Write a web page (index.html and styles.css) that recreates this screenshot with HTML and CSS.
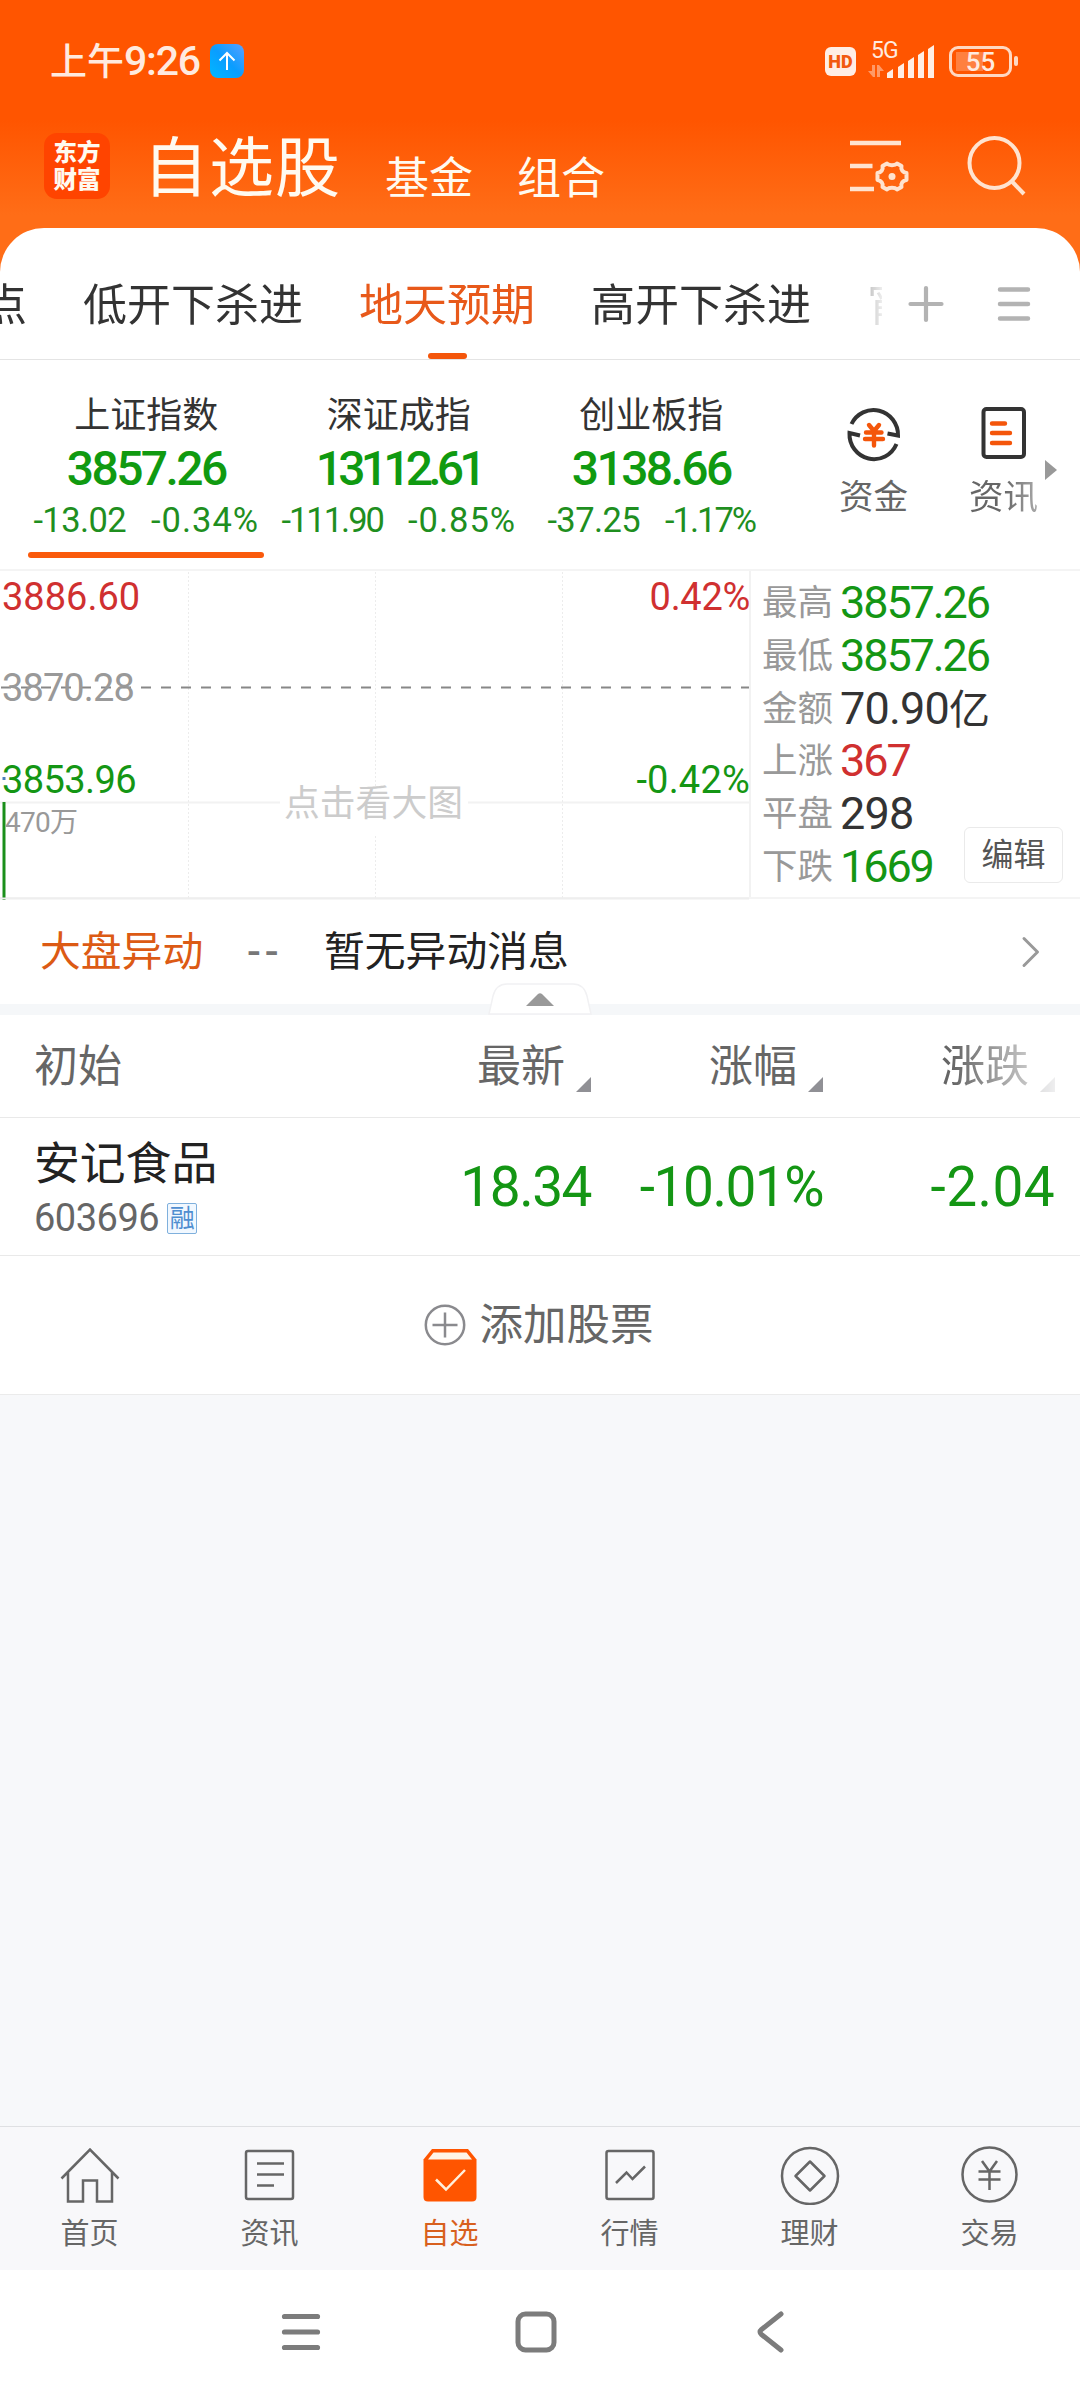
FILE: index.html
```html
<!DOCTYPE html>
<html lang="zh-CN">
<head>
<meta charset="utf-8">
<title>自选股</title>
<link rel="stylesheet" href="styles.css">
</head>
<body>
<div class="screen">
  <header class="header">
    <div class="status">
      <span class="status-time">上午<span class="status-clock">9:26</span></span>
      <svg class="status-up" width="34" height="34" viewBox="0 0 34 34">
        <defs><linearGradient id="up" x1="0" y1="1" x2="1" y2="0"><stop offset="0" stop-color="#00b8ff"/><stop offset=".5" stop-color="#0a9dff"/><stop offset="1" stop-color="#5aa0ff"/></linearGradient></defs>
        <rect width="34" height="34" rx="8" fill="url(#up)"/>
        <path d="M17 26V9M9.500 16.500 17 9l7.500 7.500" fill="none" stroke="#fff" stroke-width="2"/>
      </svg>
      <div class="status-icons">
        <span class="hd">HD</span>
        <div class="signal">
          <span class="signal-net">5G</span>
          <svg width="68" height="36" viewBox="0 0 68 36">
            <g fill="#fff" opacity=".4"><path d="M4 22h3v12H5L0 28h4zM9 34V22h2l5 6h-4v6z"/></g>
            <g fill="#ffeee5"><path d="M19 35v-5l6-4v9zM30 35V24l6-4v15zM40 35V18l6-4v21zM50 35V12l6-4v27zM60 35V6l6-4v33z"/></g>
          </svg>
        </div>
        <div class="battery"><span class="battery-body">55</span><i class="battery-tip"></i></div>
      </div>
    </div>
    <div class="titlebar">
      <div class="logo"><span>东方</span><span>财富</span></div>
      <h1 class="title">自选股</h1>
      <span class="title-link">基金</span>
      <span class="title-link">组合</span>
      <svg class="ic-filter" width="60" height="56" viewBox="0 0 60 56" fill="none" stroke="#ffe3cf" stroke-width="4.500">
        <path d="M0 5h51M0 28h22.500M0 51h24"/>
        <path stroke-width="4" stroke-linejoin="round" d="M37 25.500c2 2.200 8 2.200 10 0l4.500 2.500c-1 3.800 1.500 6.500 5 7v7c-3.500.5-6 3.200-5 7L47 51.500c-2-2.200-8-2.200-10 0L32.500 49c1-3.800-1.500-6.500-5-7v-7c3.500-.5 6-3.200 5-7z"/>
        <circle cx="42" cy="38.500" r="3.500" fill="#ffe3cf" stroke="none"/>
      </svg>
      <svg class="ic-search" width="60" height="62" viewBox="0 0 60 62" fill="none" stroke="#ffe3cf" stroke-width="4">
        <circle cx="27.500" cy="28" r="25"/><path d="m44.500 46 12.500 13"/>
      </svg>
    </div>
  </header>

  <main class="sheet">
    <nav class="tabs">
      <div class="tabs-list">
        <span class="tab">点</span>
        <span class="tab">低开下杀进</span>
        <span class="tab tab-on">地天预期</span>
        <span class="tab">高开下杀进</span>
        <span class="tab">宵</span>
      </div>
      <svg class="ic-plus" width="36" height="38" viewBox="0 0 36 38" stroke="#b3b3b3" stroke-width="4.200" stroke-linecap="round"><path d="M2.500 19h31M18 3v32"/></svg>
      <svg class="ic-menu" width="34" height="36" viewBox="0 0 34 36" stroke="#b3b3b3" stroke-width="4.500" stroke-linecap="round"><path d="M3 3.500h28M3 18h28M3 32.500h28"/></svg>
    </nav>

    <section class="indices">
      <div class="index index-on">
        <span class="index-name">上证指数</span><b class="index-val">3857.26</b>
        <span class="index-chg"><span>-13.02</span><span class="pct">-0.34%</span></span>
      </div>
      <div class="index">
        <span class="index-name">深证成指</span><b class="index-val index-val-long">13112.61</b>
        <span class="index-chg"><span class="narrow">-111.90</span><span class="pct">-0.85%</span></span>
      </div>
      <div class="index">
        <span class="index-name">创业板指</span><b class="index-val">3138.66</b>
        <span class="index-chg"><span>-37.25</span><span class="narrow">-1.17%</span></span>
      </div>
      <div class="tool">
        <svg width="60" height="60" viewBox="0 0 60 60" fill="none" stroke="#333" stroke-width="4">
          <path d="M7.500 21A24.500 25 0 0 1 54 32.500l-10.500-2M52.500 41A24.500 25 0 0 1 5.500 30L16 32.500"/>
          <g stroke="#f4560b" stroke-width="4.400" stroke-linecap="round"><path d="m25 22 5 6 5-6M22 29.500h15.500M21 36h18M30 29v13.500"/></g>
        </svg>
        <span>资金</span>
      </div>
      <div class="tool tool-news">
        <svg width="60" height="60" viewBox="0 0 60 60" fill="none" stroke="#333" stroke-width="4">
          <rect x="9.500" y="6" width="40.500" height="48" rx="3"/>
          <g stroke="#f4560b" stroke-width="4.400" stroke-linecap="round"><path d="M18 20.500h13M18 30h18M18 40h18"/></g>
        </svg>
        <span>资讯</span>
      </div>
      <i class="more"></i>
    </section>

    <section class="market">
      <div class="chart">
        <svg class="chart-grid" width="749" height="330" viewBox="0 0 749 330" fill="none">
          <path d="M0 232.500h280M468 232.500h282" stroke="#f2f2f2" stroke-width="2"/>
          <path d="M188.500 2v326M375.500 2v214M375.500 266v62M562.500 2v326" stroke="#ececec" stroke-dasharray="2 2"/>
          <path d="M1 117.500h749" stroke="#888" stroke-width="2" stroke-dasharray="10 10"/>
          <path d="M4 232v98" stroke="#1a8f1a" stroke-width="3"/>
          <path d="M2.500 208.500h3" stroke="#4a7ebb" stroke-width="3"/>
          <path d="M0 328.500h750" stroke="#eee" stroke-width="2"/>
        </svg>
        <span class="lb lb-high up">3886.60</span><span class="lb lb-highp up">0.42%</span>
        <span class="lb lb-mid">3870.28</span>
        <span class="lb lb-low down">3853.96</span><span class="lb lb-lowp down">-0.42%</span>
        <span class="lb lb-vol">470万</span><span class="lb lb-tip">点击看大图</span>
      </div>
      <dl class="stats">
        <div><dt>最高</dt><dd class="down">3857.26</dd></div>
        <div><dt>最低</dt><dd class="down">3857.26</dd></div>
        <div><dt>金额</dt><dd class="wide">70.90<span class="unit">亿</span></dd></div>
        <div><dt>上涨</dt><dd class="up">367</dd></div>
        <div><dt>平盘</dt><dd class="wide">298</dd></div>
        <div><dt>下跌</dt><dd class="down">1669</dd></div>
      </dl>
      <button class="edit">编辑</button>
    </section>

    <section class="news">
      <span class="news-tag">大盘异动</span><span class="news-time">--</span><span class="news-text">暂无异动消息</span>
      <svg class="news-go" width="20" height="34" viewBox="0 0 20 34" fill="none" stroke="#999" stroke-width="3" stroke-linecap="round" stroke-linejoin="round"><path d="M3 3.500 16.500 17 3 30.500"/></svg>
      <svg class="handle" width="104" height="32" viewBox="0 0 104 32"><path d="M1 31 5 13Q8 1 19 1h66q11 0 14 12l4 18z" fill="#fff" stroke="#f1f1f3" stroke-width="1.500"/><path d="m38 23 12-12q2-1.500 4 0l12 12z" fill="#999"/></svg>
    </section>

    <section class="table">
      <div class="thead">
        <span class="c-name">初始</span>
        <span class="c-num">最新<i></i></span><span class="c-num">涨幅<i></i></span><span class="c-num c-fade">涨跌<i></i></span>
      </div>
      <div class="trow">
        <div class="c-name"><div class="stock">安记食品</div><div class="code">603696<span class="badge">融</span></div></div>
        <span class="c-num down">18.34</span><span class="c-num down">-10.01%</span><span class="c-num c-last down">-2.04</span>
      </div>
      <div class="add">
        <svg width="42" height="42" viewBox="0 0 42 42" fill="none" stroke="#8a8a8e" stroke-width="2.500"><circle cx="21" cy="21" r="19.200"/><path d="M8.500 21h25M21 8.500v25"/></svg>
        <span>添加股票</span>
      </div>
    </section>
  </main>

  <nav class="tabbar">
    <a class="item"><svg width="60" height="60" viewBox="0 0 60 60"><path d="M1.500 33.500 30 4.500l28.500 29M8 27v29.500h15V35.500h14v21h15V27"/></svg>首页</a>
    <a class="item"><svg width="60" height="60" viewBox="0 0 60 60"><rect x="6" y="6" width="47" height="48" rx="2"/><path d="M17 18.500h27M17 29.500h27M17 40.500h17"/></svg>资讯</a>
    <a class="item item-on"><svg width="60" height="60" viewBox="0 0 60 60"><path d="M3.500 14.500 12 4h36l8.500 10.500V52q0 4.500-4.500 4.500H8q-4.500 0-4.500-4.500z" fill="#ff5500" stroke="none"/><path d="M8 14.500 13.500 7.500h33l5.500 7z" fill="#fff4e6" stroke="none"/><path d="m16 34.500 10 10 19-19.500" stroke="#fff0dc"/></svg>自选</a>
    <a class="item"><svg width="60" height="60" viewBox="0 0 60 60"><rect x="6.500" y="6" width="47" height="48" rx="2"/><path d="m16 38 10.500-10.500 6 6.500L45 21.500"/></svg>行情</a>
    <a class="item"><svg width="60" height="60" viewBox="0 0 60 60"><circle cx="30" cy="31" r="28"/><path stroke-linejoin="round" d="m30 16.500 14.500 14.500L30 45.500 15.500 31z"/></svg>理财</a>
    <a class="item"><svg width="60" height="60" viewBox="0 0 60 60"><circle cx="29.500" cy="29.500" r="27"/><path d="m22 16 7.500 10.500L37 16M18.500 26.500h22M18.500 34.500h22M29.500 26v19"/></svg>交易</a>
  </nav>
  <nav class="sysnav">
    <svg width="40" height="44" viewBox="0 0 40 44" stroke-width="5.200"><path d="M3.500 6.500h33M3.500 22h33M3.500 37.500h33"/></svg>
    <svg width="42" height="44" viewBox="0 0 42 44" stroke-width="5"><rect x="3" y="4" width="36" height="36" rx="7.500"/></svg>
    <svg width="40" height="44" viewBox="0 0 40 44" stroke-width="5"><path d="M30 4 10.500 19.500q-3 2.500 0 5L30 40"/></svg>
  </nav>
</div>
</body>
</html>
```
FILE: styles.css
```css
* { box-sizing: border-box; }
body { margin: 0; background: #fff; }
.screen {
  width: 1080px; height: 2400px; overflow: hidden;
  display: flex; flex-direction: column; background: #f7f8fa;
  font-family: Roboto, "Noto Sans CJK SC", sans-serif; color: #333;
  white-space: nowrap;
}
.up { color: #d03030; }
.down { color: #149614; }

/* header */
.header { height: 272px; flex: none; background: linear-gradient(#ff5500 120px, #ff6d17 215px); }
.status { height: 120px; display: flex; align-items: flex-start; padding: 36px 62px 0 50px; color: #ffeadf; }
.status-time { font-size: 37px; line-height: 50px; font-weight: 500; width: 160px; }
.status-clock { font-size: 41px; letter-spacing: -1.2px; }
.status-up { margin-top: 8px; }
.status-icons { margin-left: auto; display: flex; height: 50px; align-items: center; }
.hd { width: 31px; height: 29px; border-radius: 6px; background: #ffeee5; color: #f25a10; font: 900 18px/30px Roboto, sans-serif; text-align: center; }
.signal { position: relative; width: 68px; height: 36px; margin-left: 12px; }
.signal-net { position: absolute; left: 3px; top: -4px; font-size: 23px; line-height: 24px; letter-spacing: -1px; }
.battery { display: flex; align-items: center; margin-left: 13px; }
.battery-body { width: 63px; height: 31px; border: 3px solid #ffd8c2; border-radius: 9px; font-size: 26px; line-height: 26px; text-align: center; font-weight: 500; background: linear-gradient(90deg, #ff8040 55%, transparent 55%) 4px 3px / 50px 19px no-repeat; }
.battery-tip { width: 4px; height: 10px; margin-left: 2px; border-radius: 2px; background: #ffd8c2; }

.titlebar { height: 108px; display: flex; padding-left: 44px; color: #fffaf0; }
.logo { width: 66px; height: 66px; margin-top: 13px; border-radius: 13px; background: #ff4400; font: 900 23.500px/27px "Noto Sans CJK SC", sans-serif; display: flex; flex-direction: column; align-items: center; padding-top: 5px; }
.title { margin: 13px 0 0 33px; width: 242px; font-size: 65px; line-height: 72px; font-weight: 400; letter-spacing: 1px; }
.title-link { margin-top: 27px; width: 132px; font-size: 44px; line-height: 64px; }
.ic-filter { margin: 18px 0 0 201px; flex: none; }
.ic-search { margin: 15px 0 0 57px; flex: none; }

/* sheet */
.sheet { margin-top: -44px; border-radius: 44px 44px 0 0; background: #fff; flex: none; height: 1167px; border-bottom: 1px solid #ebebeb; }
.tabs { height: 132px; border-bottom: 1px solid #e4e4e4; display: flex; align-items: center; }
.tabs-list { width: 882px; height: 131px; display: flex; gap: 56px; overflow: hidden; -webkit-mask-image: linear-gradient(90deg, #000 820px, transparent 888px); mask-image: linear-gradient(90deg, #000 820px, transparent 888px); }
.tab { flex: none; font-size: 44px; line-height: 64px; padding-top: 46px; height: 131px; }
.tab:first-child { margin-left: -17px; }
.tab-on { color: #e8591a; display: flex; flex-direction: column; align-items: center; }
.tab-on::after { content: ""; width: 39px; height: 6px; margin-top: 15px; border-radius: 3px; background: #f4560b; flex: none; }
.ic-plus { margin: 20px 0 0 26px; }
.ic-menu { margin: 20px 0 0 53px; }
.indices { height: 211px; border-bottom: 2px solid #f4f4f4; display: flex; padding-left: 20px; position: relative; }
.index { width: 252.500px; flex: none; display: flex; flex-direction: column; align-items: center; padding-top: 33px; }
.index-on::after { content: ""; width: 236px; height: 6px; margin-top: 11px; border-radius: 3px; background: #fa5a0c; flex: none; }
.index-name { font-size: 36px; line-height: 46px; }
.index-val { font-size: 48px; line-height: 60px; font-weight: 500; color: #109a10; letter-spacing: -2.600px; }
.index-val-long { letter-spacing: -4.800px; }
.index-chg { display: flex; gap: 25px; font-size: 34.500px; line-height: 42px; color: #1f8f1f; letter-spacing: -.6px; }
.index-chg .pct { letter-spacing: 1px; }
.index-chg .narrow { letter-spacing: -2px; }
.tool { width: 130px; flex: none; padding-top: 43px; margin-left: 31px; display: flex; flex-direction: column; align-items: center; font-size: 34.500px; line-height: 46px; color: #666; gap: 11px; }
.tool + .tool { margin-left: 0; }
.tool-news span { background: linear-gradient(90deg, #666 50%, #aaa); -webkit-background-clip: text; background-clip: text; color: transparent; }
.more { position: absolute; left: 1045px; top: 100px; border: 10px solid transparent; border-left: 12px solid #999; border-right: 0; }

/* market */
.market { height: 328px; display: flex; position: relative; border-bottom: 2px solid #f4f4f4; }
.chart { width: 751px; flex: none; border-right: 2px solid #f2f2f2; position: relative; }
.chart-grid { display: block; margin-top: -1px; }
.lb { position: absolute; font-size: 38px; line-height: 44px; }
.lb-high { left: 2px; top: 4px; } .lb-highp { right: -1px; top: 4px; letter-spacing: -.3px; }
.lb-mid { left: 2px; top: 95px; color: #999; letter-spacing: -.9px; }
.lb-low { left: 2px; top: 187px; letter-spacing: -.6px; } .lb-lowp { right: -1px; top: 187px; letter-spacing: .2px; }
.lb-vol { left: 5px; top: 230px; font-size: 28px; color: #999; letter-spacing: -.7px; }
.lb-tip { left: 284px; top: 211px; font-size: 35.800px; color: #ccc; }
.stats { margin: 6px 0 0 11px; font-size: 45px; line-height: 52.800px; }
.stats div { display: flex; height: 52.800px; }
.stats dt { font-size: 35.500px; color: #999; width: 78px; }
.stats dd { margin: 0; letter-spacing: -2.100px; }
.stats dd.wide { letter-spacing: -.8px; }
.unit { font-size: 41px; }
.edit { position: absolute; left: 964px; top: 256px; width: 99px; height: 56px; padding: 0; border: 1px solid #eaeaea; border-radius: 6px; background: #fff; color: #555; font: 32px/50px Roboto, "Noto Sans CJK SC", sans-serif; }

/* news strip */
.news { height: 116px; border-bottom: 11px solid #f5f7f9; position: relative; display: flex; align-items: center; padding: 0 39px 0 40px; font-size: 40.800px; line-height: 60px; color: #222; }
.news-tag { color: #dc5a14; width: 207px; }
.news-time { color: #777; width: 77px; font-weight: 500; letter-spacing: 4px; }
.news-go { margin-left: auto; }
.handle { position: absolute; left: 488px; top: 84px; }

/* watch list */
.thead, .trow { display: flex; align-items: center; border-bottom: 1px solid #e9e9e9; padding-left: 34px; }
.thead { height: 103px; font-size: 44px; line-height: 64px; color: #666; padding-top: 1px; }
.c-name { width: 325px; flex: none; }
.c-num { width: 232px; flex: none; text-align: right; }
.thead i { display: inline-block; margin-left: 11px; border-bottom: 15px solid #909095; border-left: 15px solid transparent; vertical-align: -10px; }
.c-fade { -webkit-mask-image: linear-gradient(90deg, #000 130px, rgba(0,0,0,.15) 232px); mask-image: linear-gradient(90deg, #000 130px, rgba(0,0,0,.15) 232px); }
.trow { height: 138px; }
.trow .c-num { font-size: 55px; letter-spacing: -1.500px; }
.trow .c-last { letter-spacing: .4px; }
.stock { font-size: 45.800px; line-height: 60px; color: #222; margin-top: 3px; }
.code { display: flex; align-items: center; gap: 8px; font-size: 38px; line-height: 46px; color: #666; letter-spacing: -.5px; }
.badge { width: 30px; height: 31px; border: 1px solid #7fb0dd; border-radius: 2px; background: #f1f8ff; color: #4f8ed0; font-size: 25px; line-height: 29px; text-align: center; letter-spacing: 0; }
.add { height: 138px; display: flex; align-items: center; justify-content: center; gap: 14px; font-size: 43.500px; line-height: 64px; color: #666; padding: 0 3px 0 0; }
.add span { margin-top: 2px; }

/* bottom bars */
.tabbar { margin-top: auto; height: 144px; flex: none; display: flex; border-top: 1px solid #dfe0e3; background: #f8f8fa; }
.item { flex: 1; display: flex; flex-direction: column; align-items: center; padding: 18px 1px 0 0; font-size: 29px; line-height: 38px; color: #666; gap: 10px; }
.item svg { fill: none; stroke: #666; stroke-width: 2.500; }
.item-on { color: #d8601e; }
.sysnav { height: 130px; flex: none; background: #fff; display: flex; justify-content: center; gap: 194px; padding: 40px 9px 0 0; }
.sysnav svg { fill: none; stroke: #7c7c7c; stroke-linecap: round; stroke-linejoin: round; }
```
